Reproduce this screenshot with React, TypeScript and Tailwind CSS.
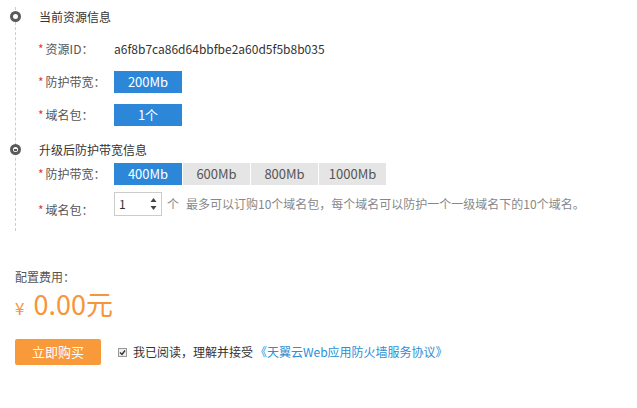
import React from 'react';

const font = "font-['Noto_Sans_CJK_SC','Noto_Sans',sans-serif]";

const Star = () => <span className="text-[#e4393c] text-[12px] mr-[2px] leading-none">*</span>;

const Label = ({ text }: { text: string }) => (
  <div className="w-[76px] flex items-center text-[12px] text-[#555]">
    <Star />
    <span>{text}</span>
  </div>
);

const RingIcon = ({ bar }: { bar?: boolean }) => (
  <span className="absolute left-[-28px] top-[4px] w-[11px] h-[11px] rounded-full border-[3px] border-[#5a5a5a] bg-white flex items-center justify-center">
    {bar && <span className="w-[3px] h-[2px] bg-[#5a5a5a]" />}
  </span>
);

const App: React.FC = () => {
  const upgrades = ['400Mb', '600Mb', '800Mb', '1000Mb'];

  return (
    <div className={`${font} w-[637px] h-[408px] bg-white text-[#333] overflow-hidden`}>
      <div className="pt-[7px]">
        <div className="relative ml-[15px] border-l border-dashed border-[#ccc] pl-[22px] pb-[12px]">
          {/* current resource */}
          <div className="relative h-[20px] flex items-center text-[12px] text-[#333]">
            <RingIcon />
            <span className="ml-[1px]">当前资源信息</span>
          </div>

          <div className="flex items-center h-[22px] mt-[11px]">
            <Label text="资源ID：" />
            <span className="text-[12px] text-[#333]">a6f8b7ca86d64bbfbe2a60d5f5b8b035</span>
          </div>

          <div className="flex items-center h-[22px] mt-[11px]">
            <Label text="防护带宽：" />
            <div className="w-[68px] h-[22px] bg-[#2d87d9] text-white text-[13px] flex items-center justify-center">200Mb</div>
          </div>

          <div className="flex items-center h-[22px] mt-[11px]">
            <Label text="域名包：" />
            <div className="w-[68px] h-[22px] bg-[#2d87d9] text-white text-[13px] flex items-center justify-center">1个</div>
          </div>

          {/* upgrade */}
          <div className="relative h-[20px] flex items-center text-[12px] text-[#333] mt-[14px]">
            <RingIcon bar />
            <span className="ml-[1px]">升级后防护带宽信息</span>
          </div>

          <div className="flex items-center h-[22px] mt-[3px]">
            <Label text="防护带宽：" />
            <div className="flex gap-px">
              {upgrades.map((u, i) => (
                <div
                  key={u}
                  className={
                    i === 0
                      ? 'w-[68px] h-[22px] bg-[#2d87d9] text-white text-[13px] flex items-center justify-center'
                      : 'w-[67px] h-[22px] bg-[#e5e5e5] text-[#555] text-[13px] flex items-center justify-center'
                  }
                >
                  {u}
                </div>
              ))}
            </div>
          </div>

          <div className="flex items-start mt-[7px]">
            <div className="mt-[9px]">
              <Label text="域名包：" />
            </div>
            <div className="w-[48px] h-[24px] border border-[#ccc] flex items-center justify-between pl-[4px] pr-[4px]">
              <span className="text-[12px] text-[#333]">1</span>
              <svg width="7" height="16" viewBox="0 0 7 16">
                <path d="M3.5 2 L6.5 6 L0.5 6 Z" fill="#444" />
                <path d="M3.5 14 L6.5 10 L0.5 10 Z" fill="#444" />
              </svg>
            </div>
            <span className="text-[12px] text-[#888] ml-[5px] leading-[24px]">个</span>
            <span className="text-[12px] text-[#888] ml-[7px] leading-[24px]">
              最多可以订购10个域名包，每个域名可以防护一个一级域名下的10个域名。
            </span>
          </div>
        </div>
      </div>

      {/* cost */}
      <div className="pl-[15px] mt-[38px]">
        <div className="text-[12px] text-[#555] leading-[16px]">配置费用：</div>
        <div className="flex items-baseline text-[#f7953a] mt-[3px] leading-[32px]">
          <span className="text-[17px] mr-[9px]">¥</span>
          <span className="text-[27px]">0.00元</span>
        </div>
        <div className="flex items-center mt-[15px]">
          <button className="w-[86px] h-[26px] bg-[#f8993a] text-white text-[13px] rounded-[2px] flex items-center justify-center">
            立即购买
          </button>
          <span className="ml-[17px] w-[9px] h-[9px] border border-[#999] bg-[#eee] flex items-center justify-center">
            <svg width="7" height="7" viewBox="0 0 7 7">
              <path d="M1 3.5 L3 5.5 L6 1.5" stroke="#333" strokeWidth="1.4" fill="none" />
            </svg>
          </span>
          <span className="ml-[6px] text-[12px] text-[#333]">我已阅读，理解并接受</span>
          <span className="ml-[2px] text-[12px] text-[#2b8fd6]">《天翼云Web应用防火墙服务协议》</span>
        </div>
      </div>
    </div>
  );
};

export default App;
